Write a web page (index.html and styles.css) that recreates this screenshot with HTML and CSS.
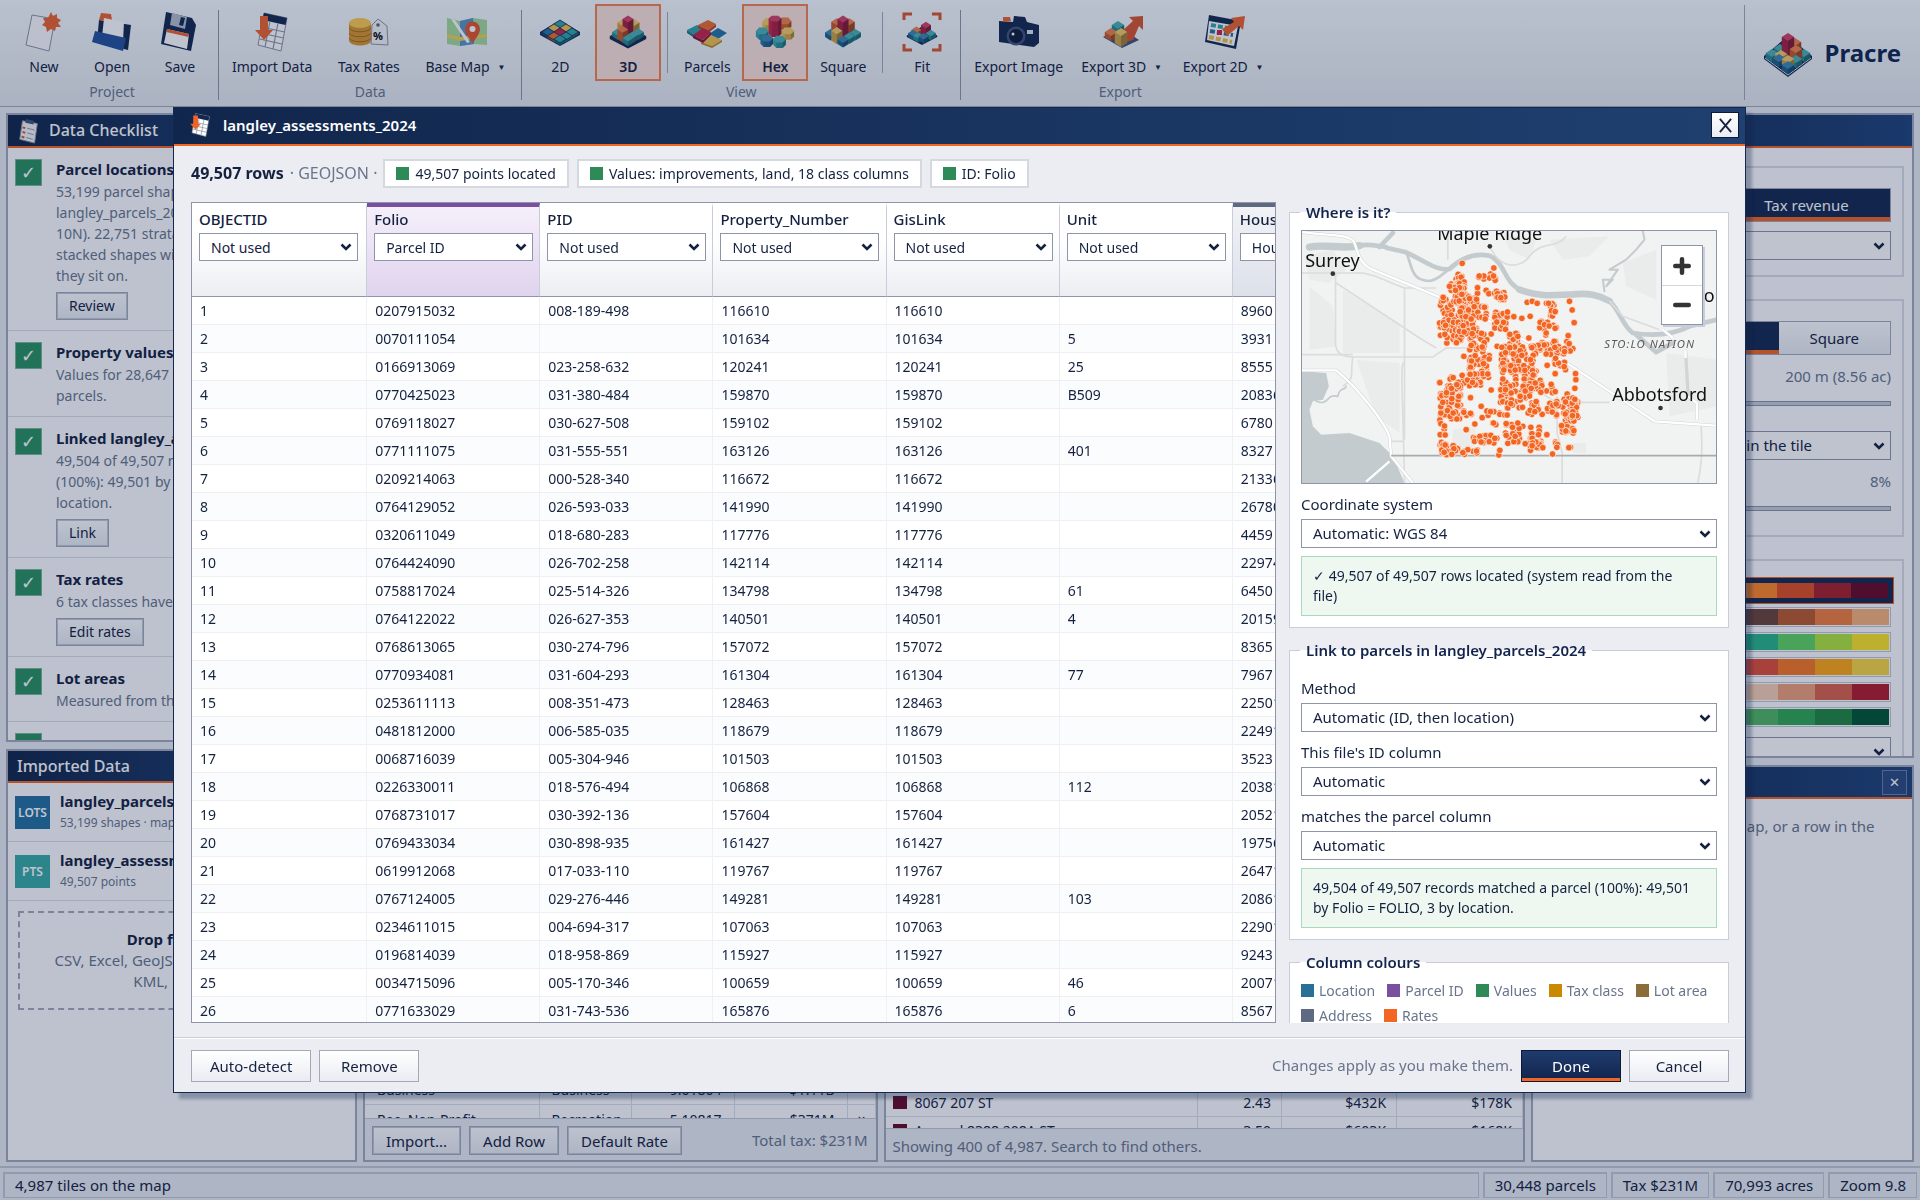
FILE: index.html
```html
<!DOCTYPE html>
<html lang="en">
<head>
<meta charset="utf-8">
<title>Pracre</title>
<link rel="stylesheet" href="styles.css">
</head>
<body>
<svg class="defs" aria-hidden="true">
  <defs>
    <!-- isometric blocks, drawn from the centre of their base; colour comes from the use element -->
    <g id="b0"><path fill="currentColor" d="M0-6 6.4-2 0 2-6.400-2Z"/><path fill="currentColor" d="M-6.400-2 0 2 6.400-2V0L0 4-6.400 0Z"/><path fill-opacity=".35" d="M-6.400-2 0 2 6.400-2V0L0 4-6.400 0Z"/><path fill="none" stroke="#14284f" stroke-width=".7" d="M0-6 6.4-2 0 2-6.400-2Z"/></g>
    <g id="b1"><path fill="currentColor" d="M0-9 6.2-5V0L0 4-6.200 0V-5Z"/><path fill="#fff" fill-opacity=".14" d="M0-9 6.200-5 0-1-6.200-5Z"/><path fill-opacity=".16" d="M-6.200-5 0-1V4L-6.200 0Z"/><path fill-opacity=".34" d="M6.200-5 0-1V4L6.200 0Z"/></g>
    <g id="b2"><path fill="currentColor" d="M0-15 6.200-11V0L0 4-6.200 0V-11Z"/><path fill="#fff" fill-opacity=".14" d="M0-15 6.200-11 0-7-6.200-11Z"/><path fill-opacity=".16" d="M-6.200-11 0-7V4L-6.200 0Z"/><path fill-opacity=".34" d="M6.200-11 0-7V4L6.200 0Z"/></g>
    <g id="b3"><path fill="currentColor" d="M0-21 6.200-17V0L0 4-6.200 0V-17Z"/><path fill="#fff" fill-opacity=".14" d="M0-21 6.200-17 0-13-6.200-17Z"/><path fill-opacity=".16" d="M-6.200-17 0-13V4L-6.200 0Z"/><path fill-opacity=".34" d="M6.200-17 0-13V4L6.200 0Z"/></g>
    <g id="h1"><path fill="currentColor" d="M-7-6-3.500-10H3.500L7-6V0L3.500 3.500H-3.500L-7 0Z"/><path fill="#fff" fill-opacity=".15" d="M-7-6-3.500-10H3.500L7-6 3.500-2.500H-3.500Z"/><path fill-opacity=".3" d="M7-6 3.500-2.500V3.500L7 0Z"/><path fill-opacity=".14" d="M-3.500-2.500H3.500V3.500H-3.500Z"/></g>
    <g id="h3"><path fill="currentColor" d="M-7-17-3.500-20H3.500L7-17V0L3.500 3.500H-3.500L-7 0Z"/><path fill="#fff" fill-opacity=".15" d="M-7-17-3.500-20H3.500L7-17 3.500-13.500H-3.500Z"/><path fill-opacity=".32" d="M7-17 3.500-13.500V3.500L7 0Z"/><path fill-opacity=".14" d="M-3.500-13.500H3.500V3.500H-3.500Z"/></g>
    <g id="sheet"><path fill="#fff" stroke="#8b93a5" d="M9 1 32 6 26 39 3 33Z"/><path fill="#14284f" d="M9 1 32 6 30.500 13 7.500 8Z"/><path fill="none" stroke="#8b93a5" stroke-width="1.200" d="M6.500 15 29.500 20M5.500 21 28.500 26M4.500 27 27 32M15 9 10 35M23 11 18 37"/><path fill="#ee622a" d="M5 4H13V18H18L9 28 0 18H5Z"/></g>
  </defs>
</svg>

<div class="app">
  <header class="ribbon">
    <section class="group">
      <div class="tools">
        <button class="tool"><svg viewBox="0 0 40 40"><path fill="#fbfbfd" stroke="#8b93a5" d="M8 3 31 7 25 39 2 33Z"/><path fill="#ee622a" d="M27 0 29 4 33 2 33 6 37 8 34 11 37 15 32 15 31 19 27 17 23 20 22 15 18 13 21 10 19 6 24 6Z"/></svg>New</button>
        <button class="tool"><svg viewBox="0 0 40 40"><path fill="#14284f" d="M7 8 39 13 36 38 5 30Z"/><path fill="#ee622a" d="M9 1 19 2 20 8 12 9 7 8Z"/><path fill="#fff" d="M12 6 32 10 31 30 10 25Z"/><path fill="#24509a" d="M3 19 34 26 31 39 0 30Z"/></svg>Open</button>
        <button class="tool"><svg viewBox="0 0 40 40"><path fill="#14284f" d="M6 0 32 6 36 13 31 39 1 32Z"/><path fill="#b6bccb" d="M12 1 27 5 25 17 10 13Z"/><path fill="#14284f" d="M21 5 25 6 23 14 19 13Z"/><path fill="#fff" d="M7 17 29 22 27 37 4 31Z"/><path fill="#ee622a" d="M7 17 29 22 28.500 25 6.500 20Z"/></svg>Save</button>
      </div>
      <div class="caption">Project</div>
    </section>
    <section class="group">
      <div class="tools">
        <button class="tool"><svg viewBox="0 0 40 40"><g transform="translate(3)"><use href="#sheet"/></g></svg>Import Data</button>
        <button class="tool wide"><svg viewBox="0 0 40 40"><path fill="#d9952a" d="M0 11V29C2 35 20 35 22 29V11Z"/><ellipse cx="11" cy="11" rx="11" ry="5" fill="#ffca4f"/><path fill="none" stroke="#a66a17" d="M0 16C2 21 20 21 22 16M0 21C2 26 20 26 22 21M0 26C2 31 20 31 22 26"/><path fill="#f4f4f6" stroke="#8b93a5" d="M29 7 38 14 39 33 22 32 23 13Z"/><circle cx="29" cy="13" r="1.800" fill="#5b6478"/><text x="24" y="28" class="pct">%</text></svg>Tax Rates</button>
        <button class="tool"><svg viewBox="0 0 40 40"><path fill="#a5db9a" d="M0 6 13 9 26 6 40 8V33L27 32 13 34 0 32Z"/><path fill="#5b93c9" d="M13 9 26 6 27 32 13 34Z"/><path fill="#f0cf57" d="M0 22 13 25 40 22V25L13 29 0 25Z"/><path fill="#fff" d="M4 7 8 8 23 30 20 31Z"/><path fill="#e2562b" d="M26 31C19 23 18 20 18 17A7 7 0 0 1 33 17C33 21 30 25 26 31Z"/><circle cx="25.500" cy="17" r="3" fill="#fff"/></svg><span>Base Map <i class="caret">▼</i></span></button>
      </div>
      <div class="caption">Data</div>
    </section>
    <section class="group">
      <div class="tools">
        <button class="tool"><svg viewBox="0 0 40 40"><path fill="#14284f" d="M20 8 40 20V23L20 34 0 23V20Z"/><g><use href="#b0" x="20" y="14" color="#2fa3a8"/><use href="#b0" x="14" y="18" color="#f2c14e"/><use href="#b0" x="26" y="18" color="#f2c14e"/><use href="#b0" x="8" y="22" color="#2173a6"/><use href="#b0" x="20" y="22" color="#c9234a"/><use href="#b0" x="32" y="22" color="#2fa3a8"/><use href="#b0" x="14" y="26" color="#ee6c2c"/><use href="#b0" x="26" y="26" color="#2fa3a8"/><use href="#b0" x="20" y="29" color="#2fa3a8"/></g></svg>2D</button>
        <button class="tool on"><svg viewBox="-1 -1 42 46"><path fill="#14284f" d="M20 14 41 27V30L20 41 -1 30V27Z"/><use href="#b2" x="20" y="20" color="#2173a6"/><use href="#b2" x="14" y="22" color="#f2c14e"/><use href="#b2" x="27" y="22" color="#f2c14e"/><use href="#b3" x="20" y="24" color="#c9234a"/><use href="#b1" x="8" y="27" color="#2fa3a8"/><use href="#b1" x="32" y="27" color="#2fa3a8"/><use href="#b2" x="14" y="30" color="#ee6c2c"/><use href="#b1" x="26" y="30" color="#2fa3a8"/><use href="#b1" x="20" y="34" color="#2fa3a8"/></svg>3D</button>
        <span class="rule"></span>
        <button class="tool"><svg viewBox="0 0 40 40"><path fill="#2fa3a8" d="M10 13 18 18 9 24 0 18Z"/><path fill="#1b7a80" d="M0 18 9 24V27L0 21Z"/><path fill="#2173a6" d="M31 16 40 21 31 27 22 22Z"/><path fill="#f2c14e" d="M24 23 35 28 25 34 14 30Z"/><path fill="#b98a1f" d="M14 30 25 34 35 28V30L25 36 14 32Z"/><path fill="#ee6c2c" d="M21 8 29 12 21 18 11 13Z"/><path fill="#b84c18" d="M11 13 21 18 29 12V15L21 21 11 16Z"/><path fill="#c9234a" d="M16 16 24 20 16 28 6 23Z"/><path fill="#861532" d="M6 23 16 28 24 20V23L16 31 6 26Z"/></svg>Parcels</button>
        <button class="tool on"><svg viewBox="-1 1 42 44"><use href="#h1" x="13" y="18" color="#f2c14e"/><use href="#h1" x="31" y="17" color="#ee6c2c"/><use href="#h1" x="6" y="28" color="#2fa3a8"/><use href="#h1" x="34" y="28" color="#f2c14e"/><use href="#h3" x="20" y="25" color="#c9234a"/><use href="#h1" x="11" y="36" color="#2173a6"/><use href="#h1" x="25" y="37" color="#2fa3a8"/></svg>Hex</button>
        <button class="tool"><svg viewBox="-1 0 42 45"><use href="#b2" x="13" y="22" color="#ee6c2c"/><use href="#b2" x="27" y="22" color="#ee6c2c"/><use href="#b3" x="20" y="25" color="#c9234a"/><use href="#b1" x="6" y="28" color="#2173a6"/><use href="#b1" x="34" y="28" color="#2fa3a8"/><use href="#b2" x="13" y="32" color="#f2c14e"/><use href="#b1" x="27" y="32" color="#2fa3a8"/><use href="#b1" x="20" y="36" color="#2173a6"/></svg>Square</button>
        <span class="rule"></span>
        <button class="tool"><svg viewBox="0 0 40 40"><path fill="none" stroke="#d9572a" stroke-width="3" d="M2 8V2H10M30 2H38V8M38 32V38H30M10 38H2V32"/><g transform="translate(4 5) scale(.8)"><path fill="#14284f" d="M20 12 39 23V25L20 35 1 25V23Z"/><use href="#b1" x="13" y="21" color="#ee6c2c"/><use href="#b2" x="25" y="21" color="#c9234a"/><use href="#b1" x="9" y="25" color="#2173a6"/><use href="#b1" x="31" y="25" color="#2fa3a8"/><use href="#b1" x="15" y="28" color="#2fa3a8"/><use href="#b1" x="22" y="29" color="#2173a6"/></g></svg>Fit</button>
      </div>
      <div class="caption">View</div>
    </section>
    <section class="group last">
      <div class="tools">
        <button class="tool"><svg viewBox="0 0 40 40"><path fill="#14284f" d="M0 9 14 10 15 4 26 5 28 10 40 13V31L35 35 0 30Z"/><path fill="#ee622a" d="M4 5 11 5 12 9 4 10Z"/><circle cx="17" cy="24" r="9.500" fill="#41527a"/><circle cx="17" cy="24" r="7" fill="#0d1c3a"/><circle cx="14" cy="22" r="1.500" fill="#fff"/><path fill="#dfe4ee" d="M28 18H34V22H28Z"/></svg>Export Image</button>
        <button class="tool"><svg viewBox="0 0 40 40"><path fill="#41527a" d="M18 16 36 28 19 36 0 25Z"/><use href="#b2" x="15" y="24" color="#2fa3a8"/><path fill="#d9532a" d="M18 20 30 9 26 5 40 4V18L36 14 30 28 24 30Z"/><use href="#b1" x="8" y="25" color="#ee6c2c"/><use href="#b2" x="18" y="31" color="#f2c14e"/></svg><span>Export 3D <i class="caret">▼</i></span></button>
        <button class="tool"><svg viewBox="0 0 40 40"><path fill="#14284f" d="M4 3 36 9 31 37 0 30Z"/><path fill="#fff" d="M4 9 33 14 29 34 2 28Z"/><path stroke="#2fa3a8" stroke-width="4" stroke-dasharray="5 2" d="M6 13 28 17"/><path stroke="#2173a6" stroke-width="4" stroke-dasharray="5 2" d="M5 19 28 23"/><path stroke="#f2c14e" stroke-width="4" stroke-dasharray="5 2" d="M4 25 27 30"/><path fill="#c9234a" d="M12 18H17V23H12Z"/><path fill="#ee622a" d="M17 17 29 10 26 6 40 4 38 18 34 14 22 24Z"/></svg><span>Export 2D <i class="caret">▼</i></span></button>
      </div>
      <div class="caption">Export</div>
    </section>
    <div class="brand"><svg viewBox="0 0 48 48"><path fill="#14284f" d="M24 7 48 27V30L24 48 0 30V27Z"/><path fill="none" stroke="#dfe4ee" d="M1 29 24 46 47 29"/><use href="#b1" x="24" y="20" color="#2fa3a8"/><use href="#b1" x="16" y="24" color="#2fa3a8"/><use href="#b2" x="31" y="24" color="#ee6c2c"/><use href="#b3" x="24" y="25" color="#c9234a"/><use href="#b1" x="8" y="29" color="#2fa3a8"/><use href="#b1" x="40" y="29" color="#2fa3a8"/><use href="#b2" x="32" y="31" color="#ee6c2c"/><use href="#b1" x="17" y="30" color="#f2c14e"/><use href="#b1" x="15" y="34" color="#2173a6"/><use href="#b1" x="32" y="35" color="#2fa3a8"/><use href="#b1" x="24" y="35" color="#f2c14e"/><use href="#b1" x="24" y="41" color="#2173a6"/></svg>Pracre</div>
  </header>

  <main class="work">
    <div class="side">
      <section class="panel checklist">
        <h2><svg viewBox="0 0 24 28"><path fill="#f4f4f6" stroke="#8b93a5" d="M5 3 21 6 18 27 2 23Z"/><path fill="#41527a" d="M9 1 17 3 17 7 8 5Z"/><path stroke="#d9572a" stroke-width="2" d="M5 10 8 11M5 15 8 16M4 20 7 21"/><path stroke="#8b93a5" d="M10 11 18 13M10 16 17 18M9 21 16 23"/></svg>Data Checklist</h2>
        <ul>
          <li><b class="tick">✓</b><div><h3>Parcel locations</h3><p>53,199 parcel shapes from<br>langley_parcels_2024 (UTM zone<br>10N). 22,751 strata lots are<br>stacked shapes with the parcel<br>they sit on.</p><button class="btn small">Review</button></div></li>
          <li><b class="tick">✓</b><div><h3>Property values</h3><p>Values for 28,647 of 30,448<br>parcels.</p></div></li>
          <li><b class="tick">✓</b><div><h3>Linked langley_assessments</h3><p>49,504 of 49,507 records matched<br>(100%): 49,501 by Folio, 3 by<br>location.</p><button class="btn small">Link</button></div></li>
          <li><b class="tick">✓</b><div><h3>Tax rates</h3><p>6 tax classes have a rate.</p><button class="btn small">Edit rates</button></div></li>
          <li><b class="tick">✓</b><div><h3>Lot areas</h3><p>Measured from the shapes.</p></div></li>
          <li><b class="tick">✓</b></li>
        </ul>
      </section>
      <section class="panel imported">
        <h2>Imported Data</h2>
        <ul>
          <li><b class="kind lots">LOTS</b><div><h3>langley_parcels_2024</h3><small>53,199 shapes · mapped</small></div></li>
          <li><b class="kind pts">PTS</b><div><h3>langley_assessments_2024</h3><small>49,507 points</small></div></li>
        </ul>
        <div class="drop"><b>Drop files here</b><br>CSV, Excel, GeoJSON, Shapefile (ZIP),<br>KML, ESRI ZIP</div>
      </section>
    </div>

    <div class="middle">
      <section class="panel map"></section>
      <section class="panel">
        <div class="clip">
          <table class="rates">
            <tr><td>Business<td>Business<td>9.01804<td>$1.11B<td>×
            <tr><td>Rec. Non-Profit<td>Recreation<td>5.10817<td>$371M<td>×
          </table>
        </div>
        <footer><button class="btn">Import...</button><button class="btn">Add Row</button><button class="btn">Default Rate</button><span class="push">Total tax: $231M</span></footer>
      </section>
      <section class="panel">
        <div class="clip">
          <table class="tiles">
            <tr><td><i></i>8067 207 ST<td>2.43<td>$432K<td>$178K
            <tr><td><i></i>Around 8388 208A ST<td>3.50<td>$603K<td>$168K
          </table>
        </div>
        <footer class="note">Showing 400 of 4,987. Search to find others.</footer>
      </section>
    </div>

    <div class="side right">
      <section class="panel settings">
        <h2></h2>
        <fieldset>
          <div class="seg"><button>Value</button><button class="on">Tax revenue</button></div>
          <select aria-label="Measure"><option>Per acre</option></select>
        </fieldset>
        <fieldset>
          <div class="seg three"><button>Parcels</button><button class="on">Hex</button><button>Square</button></div>
          <output>200 m (8.56 ac)</output>
          <div class="track"></div>
          <select class="spread" aria-label="Spread"><option>Every parcel by land area in the tile</option></select>
          <output>8%</output>
          <div class="track"></div>
        </fieldset>
        <fieldset class="ramps">
          <div class="ramp on"><i style="background:#ff8524"></i><i style="background:#e14d21"></i><i style="background:#a61e29"></i><i style="background:#680824"></i></div>
          <div class="ramp"><i style="background:#6b4337"></i><i style="background:#bc5a2a"></i><i style="background:#f27d3b"></i><i style="background:#f8b277"></i></div>
          <div class="ramp"><i style="background:#2ab588"></i><i style="background:#61d460"></i><i style="background:#b1e53b"></i><i style="background:#ffe525"></i></div>
          <div class="ramp"><i style="background:#e14d37"></i><i style="background:#f77720"></i><i style="background:#ffa712"></i><i style="background:#f8d640"></i></div>
          <div class="ramp"><i style="background:#f8cfb2"></i><i style="background:#f09f79"></i><i style="background:#da614b"></i><i style="background:#b21b2a"></i></div>
          <div class="ramp"><i style="background:#51b660"></i><i style="background:#2fa652"></i><i style="background:#218640"></i><i style="background:#015634"></i></div>
          <select aria-label="Scale"><option>Quantile</option></select>
        </fieldset>
      </section>
      <section class="panel details">
        <h2><button aria-label="Close panel">✕</button></h2>
        <p>Click any tile or lot on the map, or a row in the<br>list, to see it here.</p>
      </section>
    </div>
  </main>

  <footer class="status"><span>4,987 tiles on the map</span><span>30,448 parcels</span><span>Tax $231M</span><span>70,993 acres</span><span>Zoom 9.8</span></footer>
</div>

<div class="overlay">
  <div class="modal" role="dialog" aria-labelledby="dlg-title">
    <header>
      <svg viewBox="0 0 36 40"><use href="#sheet"/></svg>
      <h1 id="dlg-title">langley_assessments_2024</h1>
      <button class="close" aria-label="Close"><svg viewBox="0 0 16 16"><path d="M2 1 14 15M14 1 2 15"/></svg></button>
    </header>
    <div class="body">
      <div class="summary"><b>49,507 rows</b><span class="muted">· GEOJSON ·</span><span class="chip">49,507 points located</span><span class="chip">Values: improvements, land, 18 class columns</span><span class="chip">ID: Folio</span></div>
      <div class="columns">
        <div class="grid">
          <table>
            <thead><tr>
              <th><label for="c1">OBJECTID</label><select id="c1"><option>Not used</option></select></th>
              <th class="id"><label for="c2">Folio</label><select id="c2"><option>Parcel ID</option></select></th>
              <th><label for="c3">PID</label><select id="c3"><option>Not used</option></select></th>
              <th><label for="c4">Property_Number</label><select id="c4"><option>Not used</option></select></th>
              <th><label for="c5">GisLink</label><select id="c5"><option>Not used</option></select></th>
              <th><label for="c6">Unit</label><select id="c6"><option>Not used</option></select></th>
              <th class="address"><label for="c7">House</label><select id="c7"><option>House number</option></select></th>
            </tr></thead>
            <tbody>
              <tr><td>1<td>0207915032<td>008-189-498<td>116610<td>116610<td><td>8960
              <tr><td>2<td>0070111054<td><td>101634<td>101634<td>5<td>3931
              <tr><td>3<td>0166913069<td>023-258-632<td>120241<td>120241<td>25<td>8555
              <tr><td>4<td>0770425023<td>031-380-484<td>159870<td>159870<td>B509<td>20836
              <tr><td>5<td>0769118027<td>030-627-508<td>159102<td>159102<td><td>6780
              <tr><td>6<td>0771111075<td>031-555-551<td>163126<td>163126<td>401<td>8327
              <tr><td>7<td>0209214063<td>000-528-340<td>116672<td>116672<td><td>21336
              <tr><td>8<td>0764129052<td>026-593-033<td>141990<td>141990<td><td>26780
              <tr><td>9<td>0320611049<td>018-680-283<td>117776<td>117776<td><td>4459
              <tr><td>10<td>0764424090<td>026-702-258<td>142114<td>142114<td><td>22974
              <tr><td>11<td>0758817024<td>025-514-326<td>134798<td>134798<td>61<td>6450
              <tr><td>12<td>0764122022<td>026-627-353<td>140501<td>140501<td>4<td>20159
              <tr><td>13<td>0768613065<td>030-274-796<td>157072<td>157072<td><td>8365
              <tr><td>14<td>0770934081<td>031-604-293<td>161304<td>161304<td>77<td>7967
              <tr><td>15<td>0253611113<td>008-351-473<td>128463<td>128463<td><td>22501
              <tr><td>16<td>0481812000<td>006-585-035<td>118679<td>118679<td><td>22491
              <tr><td>17<td>0068716039<td>005-304-946<td>101503<td>101503<td><td>3523
              <tr><td>18<td>0226330011<td>018-576-494<td>106868<td>106868<td>112<td>20381
              <tr><td>19<td>0768731017<td>030-392-136<td>157604<td>157604<td><td>20521
              <tr><td>20<td>0769433034<td>030-898-935<td>161427<td>161427<td><td>19756
              <tr><td>21<td>0619912068<td>017-033-110<td>119767<td>119767<td><td>26471
              <tr><td>22<td>0767124005<td>029-276-446<td>149281<td>149281<td>103<td>20861
              <tr><td>23<td>0234611015<td>004-694-317<td>107063<td>107063<td><td>22901
              <tr><td>24<td>0196814039<td>018-958-869<td>115927<td>115927<td><td>9243
              <tr><td>25<td>0034715096<td>005-170-346<td>100659<td>100659<td>46<td>20071
              <tr><td>26<td>0771633029<td>031-743-536<td>165876<td>165876<td>6<td>8567
            </tbody>
          </table>
        </div>
        <aside>
          <fieldset>
            <legend>Where is it?</legend>
            <div class="locator">
              <svg id="locator" viewBox="36 34 1245 756" preserveAspectRatio="xMidYMid slice">
                <path fill="#f1f2f2" d="M36 34H1281V790H36Z"/>
                <g fill="#eaecec"><path d="M45 110 130 90 170 150 120 190 60 180ZM60 200 130 260 140 380 60 390ZM160 210 330 310 330 400 160 400ZM640 40 740 60 720 120 660 90ZM780 60 960 50 900 110 820 120ZM1000 130 1100 90 1100 240 1010 200ZM1130 400 1281 420V560L1140 590ZM200 420 330 430 330 640 260 590ZM490 630 560 620 550 690 490 680ZM850 670H890V700H850Z"/></g>
                <path fill="#c3cbce" d="M36 455 110 460 118 500 100 540 70 545 60 570 70 620 95 645 180 640 270 670 310 710 345 790H36Z"/>
                <g fill="none" stroke="#c3cbce" stroke-linecap="round" stroke-linejoin="round">
                  <path stroke-width="22" d="M60 82C110 72 160 90 210 78"/>
                  <path stroke-width="14" d="M210 78C240 70 260 80 290 82M270 82 310 40M290 84 350 98C400 120 440 155 480 148 520 110 560 100 600 108 650 130 640 190 700 214"/>
                  <path stroke-width="8" d="M350 98C370 140 360 180 420 184 450 180 460 160 480 148"/>
                  <path stroke-width="20" d="M690 210C760 235 800 225 850 224 900 220 930 226 960 244"/>
                  <path stroke-width="14" d="M960 244C990 270 1000 320 1030 340 1090 350 1150 345 1200 320L1281 300M1040 345 1100 398 1150 370"/>
                  <path stroke-width="6" d="M945 215 940 180 970 180 950 200 985 150 960 150 1010 120 1040 90 1065 60 1060 34"/>
                  <path stroke-width="5" d="M80 545C120 560 110 520 145 530 150 500 165 515 170 500"/>
                </g>
                <g fill="none" stroke="#dbdcdd" stroke-width="5" stroke-linejoin="round">
                  <path d="M36 160H200C240 155 300 190 345 205H440M138 160V370C138 400 160 412 190 412H430L470 385H530M140 190 390 355 440 385M345 205V660M36 405H190M345 430C330 420 340 520 345 790M190 412C180 470 200 470 160 500M308 665H345M475 34V120M803 530V640L818 700V790M740 510 800 548H960M1235 620C1240 700 1235 740 1225 790M600 80C640 160 700 140 720 110 760 60 800 90 830 50M960 244 1000 290 1110 330"/>
                </g>
                <g fill="none" stroke="#d2d4d5" stroke-width="10" stroke-linejoin="round"><path d="M36 36C90 48 160 40 190 62 205 80 200 130 250 150L445 230 600 305 840 435 1095 605 1281 618M36 452H140C200 500 280 600 300 650L305 710 370 790M1188 390 1196 530 1222 550V600M1120 330 1150 355"/></g>
                <g fill="none" stroke="#fff" stroke-width="7" stroke-linejoin="round"><path d="M36 36C90 48 160 40 190 62 205 80 200 130 250 150L445 230 600 305 840 435 1095 605 1281 618M36 452H140C200 500 280 600 300 650L305 710 370 790M1188 390V415M1196 530 1222 550V600M1120 330 1150 355M230 786 300 725"/></g>
                <path stroke="#a8aaac" stroke-width="5" d="M305 708H1281"/>
                <g id="dots"></g>
                <g class="place"><circle cx="130" cy="162" r="7"/><text x="47" y="143">Surrey</text><circle cx="601" cy="80" r="7"/><text x="443" y="62">Maple Ridge</text><circle cx="1113" cy="565" r="7"/><text x="968" y="545">Abbotsford</text><text x="1114" y="248">Mission</text><text x="944" y="384" class="nation">STO:LO NATION</text></g>
              </svg>
              <div class="zoom"><button aria-label="Zoom in"><svg viewBox="0 0 16 16"><path d="M8 2V14M2 8H14"/></svg></button><button aria-label="Zoom out"><svg viewBox="0 0 16 16"><path d="M2 8H14"/></svg></button></div>
            </div>
            <label for="crs">Coordinate system</label>
            <select id="crs"><option>Automatic: WGS 84</option></select>
            <p class="ok">✓ 49,507 of 49,507 rows located (system read from the file)</p>
          </fieldset>
          <fieldset>
            <legend>Link to parcels in langley_parcels_2024</legend>
            <label for="method">Method</label>
            <select id="method"><option>Automatic (ID, then location)</option></select>
            <label for="idcol">This file's ID column</label>
            <select id="idcol"><option>Automatic</option></select>
            <label for="pcol">matches the parcel column</label>
            <select id="pcol"><option>Automatic</option></select>
            <p class="ok">49,504 of 49,507 records matched a parcel (100%): 49,501 by Folio = FOLIO, 3 by location.</p>
          </fieldset>
          <fieldset>
            <legend>Column colours</legend>
            <ul class="key"><li class="k1">Location</li><li class="k2">Parcel ID</li><li class="k3">Values</li><li class="k4">Tax class</li><li class="k5">Lot area</li><li class="k6">Address</li><li class="k7">Rates</li></ul>
          </fieldset>
        </aside>
      </div>
    </div>
    <footer><button class="btn big">Auto-detect</button><button class="btn big">Remove</button><span class="muted push">Changes apply as you make them.</span><button class="btn big primary">Done</button><button class="btn big">Cancel</button></footer>
  </div>
</div>
<script src="dots.js"></script>
</body>
</html>
```
FILE: dots.js
```js
// Assessment points on the locator map: lone points, then areas as [x, y, width, height, count].
const lone = [[518,131],[613,145],[840,245],[848,271],[854,309],[673,291],[722,290],[697,296],[718,355],[836,348],[623,380],[797,462],[773,437],[858,462],[859,480],[843,683],[723,692],[789,703],[628,706],[631,692],[523,410],[605,343],[713,248],[728,245],[743,251],[772,645],[752,482],[605,511],[543,534],[575,560],[556,613],[530,630],[578,594],[630,580],[740,455],[590,212],[598,222],[592,360],[828,450],[838,684],[856,506],[700,620]];
const areas = [[500,160,22,20,6],[560,162,62,22,12],[482,185,46,30,16],[452,232,110,100,75],[480,200,85,50,36],[450,300,70,76,40],[510,260,55,90,38],[560,245,35,55,9],[614,214,34,32,20],[612,275,42,60,26],[757,250,46,40,13],[750,290,25,60,9],[775,310,50,25,5],[540,340,45,60,20],[655,337,36,40,14],[745,365,105,40,36],[795,395,32,50,8],[636,378,104,120,100],[540,405,62,80,46],[515,460,60,40,18],[450,472,64,128,75],[640,490,165,30,26],[632,500,95,50,34],[450,600,18,105,18],[455,672,60,34,22],[515,570,40,20,6],[590,572,70,18,8],[715,545,90,45,26],[820,520,46,86,50],[785,540,30,20,4],[812,612,46,30,12],[645,610,46,64,24],[722,612,32,74,18],[545,645,80,28,18],[520,690,50,15,8],[690,655,80,30,8],[798,662,16,28,4],[632,540,80,30,8],[602,607,18,18,3]];
let seed = 7;
const rand = () => (seed = (seed * 16807) % 2147483647) / 2147483647;
const points = [...lone];
for (const [x, y, w, h, n] of areas) {
  for (let i = 0; i < n; i++) points.push([Math.round(x + rand() * w), Math.round(y + rand() * h)]);
}
document.getElementById('dots').innerHTML = points.map(([x, y]) => `<circle cx="${x}" cy="${y}" r="10"/>`).join('');
```
FILE: styles.css
```css
:root {
  --ink: #14213f;
  --muted: #69758c;
  --navy: #14284f;
  --orange: #f26522;
  --line: #a3a9b9;
}
* { box-sizing: border-box; }
body { margin: 0; height: 100vh; overflow: hidden; color: var(--ink); font: 15px/21px "Noto Sans", "Open Sans", sans-serif; }
h1, h2, h3, p, ul { margin: 0; padding: 0; list-style: none; }
button, select { font: inherit; color: inherit; }
h3 { font-size: 15px; line-height: 20px; }
.defs { display: none; }
.muted { color: var(--muted); }
.push { margin-left: auto; }

.app { height: 100%; display: flex; flex-direction: column; background: #eaeef3; }

/* ribbon */
.ribbon { display: flex; height: 107px; flex: none; padding-left: 6px; font-size: 14px; background: linear-gradient(#f9fcff, #e5e9ee); border-bottom: 1px solid #a3a9b9; }
.group { position: relative; padding: 4px 6px 0 5px; }
.group::after { content: ""; position: absolute; right: 0; top: 10px; height: 90px; border-right: 1px solid #8d95a8; }
.group.last::after { display: none; }
.tools { display: flex; gap: 2px; }
.tool { min-width: 66px; height: 77px; padding: 7px 7px 0; border: 1px solid transparent; background: none; display: flex; flex-direction: column; align-items: center; line-height: 20px; }
.tool svg { width: 40px; height: 40px; margin-bottom: 5px; }
.tool.wide { min-width: 93px; }
.tool.on { border: 2px solid #f5824e; padding: 6px 6px 0; background: #fde3d9; font-weight: 600; }
.pct { font-weight: 700; font-size: 11px; }
.caret { font-size: 8px; font-style: normal; margin: 0 3px 0 4px; vertical-align: 2px; }
.rule { width: 1px; height: 61px; margin: 8px 4px 0; background: #a3a9b9; }
.caption { text-align: center; color: var(--muted); line-height: 22px; }
.brand { margin: 5px 0 0 auto; height: 95px; padding: 0 19px; border-left: 1px solid #a3a9b9; display: flex; align-items: center; gap: 13px; font-weight: 700; font-size: 24px; color: #0f2650; }
.brand svg { width: 48px; height: 48px; }

/* work area */
.work { flex: 1; min-height: 0; padding: 6px 6px 4px; display: grid; grid-template-columns: 351px 1fr 383px; gap: 6px; }
.side { display: grid; grid-template-rows: 629px 1fr; gap: 7px; min-height: 0; }
.side.right { grid-template-rows: 645px 1fr; }
.middle { display: grid; grid-template: 1fr 300px / 515fr 642fr; gap: 6px; min-height: 0; }
.middle .map { grid-column: 1 / 3; }
.panel { border: 2px solid var(--line); background: #fefeff; overflow: hidden; min-width: 0; min-height: 0; display: flex; flex-direction: column; }
.panel h2 { flex: none; height: 33px; padding: 0 9px; border-bottom: 2px solid var(--orange); background: linear-gradient(90deg, #112548, #1f4279); color: #fff; display: flex; align-items: center; gap: 8px; font-weight: 500; font-size: 16px; }
.imported h2, .details h2 { height: 32px; }
.panel h2 svg { width: 24px; height: 26px; }
.btn { height: 28px; padding: 0 13px; border: 1px solid var(--line); box-shadow: inset 0 0 0 1px #c3c8d4; background: linear-gradient(#fff, #e9ecf2); line-height: 20px; }

.checklist li { display: flex; gap: 14px; padding: 11px 8px 10px 7px; border-bottom: 1px solid #dadde6; color: var(--muted); font-size: 14px; }
.checklist h3, .imported h3 { color: var(--ink); white-space: nowrap; }
.checklist p { margin-top: 2px; }
.tick { flex: none; width: 27px; height: 27px; border: 1px solid #7cb89a; background: #2a9160; color: #fff; font: 18px/25px "DejaVu Sans", sans-serif; text-align: center; }
.btn.small { margin-top: 6px; padding: 0 12px; color: var(--ink); }

.imported li { display: flex; align-items: center; gap: 10px; height: 59px; padding: 0 7px; border-bottom: 1px solid #dadde6; }
.imported small { margin-top: 2px; font-size: 12px; line-height: 20px; color: var(--muted); display: block; }
.kind { width: 35px; height: 33px; color: #fff; font-size: 12px; line-height: 33px; text-align: center; font-weight: 600; flex: none; }
.lots { background: #236f9f; }
.pts { background: #39aaa5; }
.drop { margin: 10px; height: 99px; padding-top: 16px; border: 2px dashed var(--line); text-align: center; color: var(--muted); white-space: nowrap; }
.drop b { color: var(--ink); }

.clip { flex: 1; min-height: 0; overflow: hidden; display: flex; flex-direction: column; justify-content: flex-end; }
.clip table { border-collapse: collapse; table-layout: fixed; width: 100%; font-size: 14px; }
.clip td { height: 28px; padding: 0 10px; border-right: 1px solid #dadde6; border-bottom: 1px solid #dadde6; text-align: right; white-space: nowrap; }
.clip td:first-child { text-align: left; }
.rates { margin-bottom: -17px; }
.rates td { height: 30px; padding: 0 12px; }
.rates td:nth-child(1) { width: 174px; }
.rates td:nth-child(2) { width: 92px; text-align: left; }
.rates td:nth-child(3) { width: 103px; }
.rates td:nth-child(4) { width: 113px; }
.rates td:nth-child(5) { padding: 0 9px; }
.tiles { margin-bottom: -17px; }
.tiles td:first-child { width: 312px; padding: 0 7px; }
.tiles td:nth-child(2) { width: 84px; }
.tiles td:nth-child(3) { width: 115px; }
.tiles i { display: inline-block; width: 14px; height: 13px; margin-right: 8px; background: #680824; vertical-align: -1px; }
.panel footer { height: 42px; flex: none; padding: 2px 8px 0 7px; border-top: 1px solid #c3c8d4; background: #e9ecf2; display: flex; align-items: center; gap: 8px; color: var(--muted); }
.panel footer .btn { color: var(--ink); height: 29px; }
.panel footer.note { height: 32px; padding: 4px 7px 0; }

.settings fieldset { margin: 18px 8px 22px 9px; padding: 20px 11px 15px; border: 2px solid #dadde6; min-width: 0; }
.settings fieldset + fieldset { margin-top: 0; }
.seg { display: grid; grid-template-columns: 1fr 1fr; height: 34px; margin-bottom: 9px; border: 1px solid var(--line); }
.seg.three { grid-template-columns: repeat(3, 1fr); margin-bottom: 11px; }
.seg button { border: 0; background: linear-gradient(#fff, #e9ecf2); }
.seg .on { background: var(--navy); color: #fff; box-shadow: inset 0 -4px var(--orange); }
.settings output { display: block; text-align: right; color: var(--muted); }
.track { height: 5px; margin: 14px 0 25px; border: 1px solid #8d95a8; background: #c9ced9; }
.track:last-child { margin-bottom: 9px; }
.spread { margin-bottom: 11px; }
.settings .ramps { padding-top: 17px; }
.ramp { display: flex; justify-content: flex-end; height: 20px; margin-bottom: 5px; border: 1px solid #c3c8d4; padding: 1px; }
.ramp i { width: 37px; }
.ramp.on { height: 25px; margin: 0 -2px 4px; padding: 4px; outline: 1px solid var(--orange); border-color: var(--navy); background: var(--navy); }
.ramp:last-of-type { margin-bottom: 10px; }
.details h2 { justify-content: flex-end; padding: 0 5px; }
.details h2 button { width: 25px; height: 25px; padding: 0; border: 1px solid #6b7fa6; background: #2b4a80; color: #fff; font-size: 13px; }
.details p { padding: 17px 18px; color: var(--muted); white-space: nowrap; }

.status { flex: none; height: 34px; padding: 4px 3px 2px; border-top: 2px solid #c3c8d4; background: #e9ecf2; display: flex; gap: 4px; }
.status span { padding: 1px 10px; border: 1px solid #c3c8d4; border-width: 2px 1px 1px 2px; }
.status span:first-child { flex: 1; }

/* dialog */
.overlay { position: fixed; inset: 0; padding: 107px 174px 107px 173px; background: rgba(15, 35, 75, .27); display: grid; }
.modal { min-height: 0; min-width: 0; border: 1px solid #14284f; background: #ecedf2; box-shadow: 6px 6px 3px rgba(15, 32, 68, .3); display: flex; flex-direction: column; }
.modal > header { flex: none; height: 38px; padding: 0 6px 2px 16px; display: flex; align-items: center; border-bottom: 2px solid var(--orange); background: linear-gradient(90deg, #11264c, #1f4070); color: #fff; }
.modal > header svg { width: 22px; height: 24px; }
h1 { margin-left: 11px; font-size: 15px; font-weight: 600; }
.close { margin-left: auto; width: 28px; height: 26px; padding: 0; border: 1px solid #0c1a38; background: linear-gradient(#fff, #e9ecf2); display: grid; place-items: center; }
.modal > header .close svg { width: 15px; height: 15px; }
.close path { stroke: #14213f; stroke-width: 2; }
.body { flex: 1; min-height: 0; padding: 13px 16px 14px 17px; display: flex; flex-direction: column; gap: 14px; }
.summary { display: flex; align-items: center; gap: 6px; height: 29px; flex: none; font-size: 16px; }
.chip { height: 29px; padding: 0 11px; border: 2px solid #d5d8e0; background: #fff; display: flex; align-items: center; gap: 6px; font-size: 14px; line-height: 20px; }
.chip + .chip { margin-left: 2px; }
.chip::before { content: ""; width: 13px; height: 13px; background: #2e8b57; }
.columns { flex: 1; min-height: 0; display: grid; grid-template-columns: 1fr 440px; gap: 13px; }
.grid { min-width: 0; overflow: hidden; border: 1px solid #8f95a8; background: #fff; font-size: 14px; }
.grid table { border-collapse: separate; border-spacing: 0; table-layout: fixed; width: 1214px; }
.grid th { width: 173px; height: 94px; padding: 2px 7px; vertical-align: top; text-align: left; font-weight: 500; font-size: 15px; border-right: 1px solid #c9cddb; border-bottom: 1px solid #8f95a8; border-top: 4px solid transparent; background: linear-gradient(#fff, #fff 40%, #ecedf1) border-box; }
.grid th:first-child { width: 175px; }
.grid th label { display: block; line-height: 21px; margin-bottom: 3px; }
.grid th.id { border-top-color: #7a4fa0; background: linear-gradient(#f5effa, #e0d3ee); }
.grid th.address { border-top-color: #5d6a82; background: linear-gradient(#f0f2f6, #dde1ea); }
.grid td { height: 28px; padding: 0 8px; border-right: 1px solid #f0f1f4; border-bottom: 1px solid #eeeff3; line-height: 20px; }
.grid tr:nth-child(even) td { background: #fafcfd; }
select { appearance: none; height: 29px; width: 100%; padding: 0 24px 0 11px; border: 1px solid #8f95a8; border-radius: 0; background: #fff url("data:image/svg+xml,%3Csvg xmlns='http://www.w3.org/2000/svg' width='12' height='8'%3E%3Cpath d='M1.500 1.500 6 6 10.500 1.500' fill='none' stroke='%2314213f' stroke-width='2.600'/%3E%3C/svg%3E") no-repeat right 5px center; }
.grid select { height: 28px; width: 159px; font-size: 14px; font-weight: 400; }

aside { overflow: hidden; }
aside fieldset { margin: 0 0 12px; padding: 7px 11px 11px; border: 1px solid #c9cddb; background: #fff; min-width: 0; }
legend { margin-left: -1px; padding: 0 6px; height: 21px; font-weight: 600; color: #12244c; }
aside label { display: block; margin: 10px 0 4px; }
.ok { margin-top: 8px; padding: 9px 16px 9px 11px; border: 1px solid #a9d9bd; background: #eef8f1; font-size: 14px; line-height: 20px; }
.locator { position: relative; height: 254px; border: 1px solid #8f95a8; }
.locator > svg { display: block; width: 100%; height: 100%; }
#dots { fill: #f26522; stroke: #fff; stroke-width: 2; }
.place { font-size: 54px; fill: #111; }
.place circle { fill: #333; }
.place .nation { font-size: 34px; font-style: italic; letter-spacing: 3px; fill: #5a5a5a; }
.zoom { position: absolute; right: 13px; top: 14px; width: 42px; border: 1px solid #8f95a8; background: #fff; box-shadow: 2px 2px 0 #c9cddb; }
.zoom button { width: 40px; height: 39px; padding: 0; border: 0; background: none; display: grid; place-items: center; }
.zoom button + button { border-top: 1px solid #d5d8e0; }
.zoom svg { width: 18px; height: 18px; }
.zoom path { stroke: #333; stroke-width: 4; stroke-linecap: round; }
.key { display: flex; flex-wrap: wrap; gap: 4px 12px; font-size: 14px; color: var(--muted); }
.key li { display: flex; align-items: center; gap: 5px; }
.key li::before { content: ""; width: 13px; height: 13px; background: currentColor; }
.k1::before { color: #2a6f97; } .k2::before { color: #7a4fa0; } .k3::before { color: #2e8b57; } .k4::before { color: #c98a00; }
.k5::before { color: #8a6d3b; } .k6::before { color: #5d6a82; } .k7::before { color: #f26522; }
.modal > footer { flex: none; height: 55px; padding: 1px 16px 0 17px; border-top: 1px solid #c9cddb; box-shadow: inset 0 1px #fff; display: flex; align-items: center; gap: 8px; }
.btn.big { height: 32px; min-width: 100px; padding: 0 18px; border-color: #a3a9b9; box-shadow: none; }
.btn.primary { border-color: #0c1a38; background: linear-gradient(#1f3c6e, #12244c); color: #fff; box-shadow: inset 0 -3px var(--orange); }
```
